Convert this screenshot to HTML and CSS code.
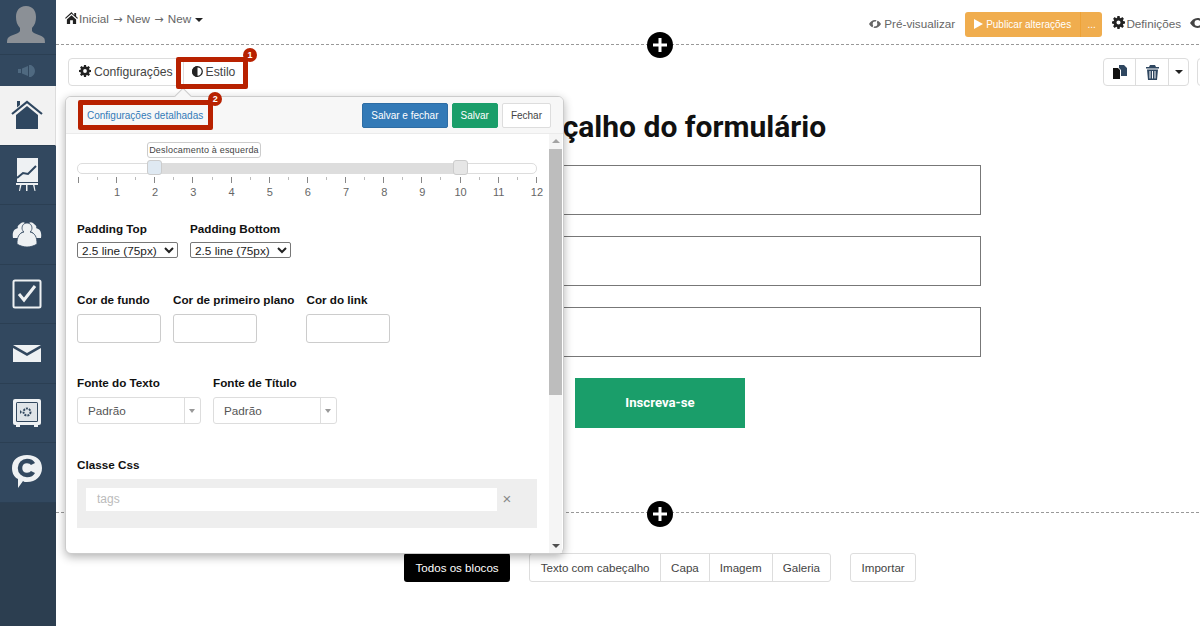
FILE: index.html
```html
<!DOCTYPE html>
<html>
<head>
	<meta charset="utf-8">
	<title>Editor</title>
	<link rel="stylesheet" href="styles.css">
</head>
<body>
	<div class="sidebar">
		<div class="side-avatar">
			<svg width="56" height="54" viewBox="0 0 56 54"><path fill="#8b9096" d="M26 6c-7 0-10 5-10 11 0 4 1 8 4 11v3c-1 3-10 4-12 7-1 1-1 5-1 5h38s0-4-1-5c-2-3-11-4-12-7v-3c3-3 4-7 4-11 0-6-3-11-10-11z"/></svg>
		</div>
		<div class="side-sound">
			<svg width="18" height="12" viewBox="0 0 18 12"><path fill="#4f6980" d="M0 4h3v4H0zM4 3.500l6-2.500v10L4 8.500zM11 0h2c2 1 4 3 4 6s-2 5-4 6h-2z"/></svg>
		</div>
		<div class="side-item active">
			<svg width="32" height="30" viewBox="0 0 32 30"><path fill="#2f4760" d="M6 1h3v4L6 7.500z"/><path fill="none" stroke="#2f4760" stroke-width="2.200" d="M1 14 16 2l15 12"/><path fill="#2f4760" d="M5 15 16 6l11 9v14H5z"/></svg>
		</div>
		<div class="side-item">
			<svg width="24" height="34" viewBox="0 0 24 34"><path fill="#eef1f3" d="M2 0h21v24H2z"/><path fill="none" stroke="#2f4760" stroke-width="2" d="M2 20l6-5 5 1 8-8"/><path fill="#eef1f3" d="M1 25h22v2H1zM5 27l-1 6h1l1.500-6zM11 27h1.500v6H11zM18 27l1.500 6h1l-1-6z"/></svg>
		</div>
		<div class="side-item">
			<svg width="30" height="26" viewBox="0 0 30 26"><path fill="#eef1f3" d="M8 3a3.500 3.500 0 0 1 5-1c-2 2-2 5-1 8-3 1-5 3-6 7H1c-1-6 1-9 5-10-1-1 0-3 2-4zM22 3a3.500 3.500 0 0 0-5-1c2 2 2 5 1 8 3 1 5 3 6 7h5c1-6-1-9-5-10 1-1 0-3-2-4z"/><path fill="#eef1f3" d="M15 2c3 0 5 2 5 5 0 2-1 3-2 4 5 1 7 5 7 12-3 2-7 3-10 3s-7-1-10-3c0-7 2-11 7-12-1-1-2-2-2-4 0-3 2-5 5-5z" stroke="#32485f" stroke-width=".8"/></svg>
		</div>
		<div class="side-item">
			<svg width="30" height="30" viewBox="0 0 30 30"><rect x="1.500" y="1.500" width="27" height="27" rx="1.500" fill="none" stroke="#eef1f3" stroke-width="2"/><path fill="none" stroke="#eef1f3" stroke-width="3" d="M7 15l5 6 11-14"/></svg>
		</div>
		<div class="side-item">
			<svg width="28" height="17" viewBox="0 0 28 17"><path fill="#eef1f3" d="M0 0l14 8 14-8zM0 3v14h28V3L14 11z"/></svg>
		</div>
		<div class="side-item">
			<svg width="30" height="30" viewBox="0 0 30 30"><rect x="1" y="1" width="28" height="26" rx="2" fill="#eef1f3"/><rect x="4" y="4" width="22" height="20" rx="1.500" fill="#32485f"/><rect x="5" y="5" width="20" height="18" fill="#dfe4e8"/><circle cx="15" cy="14" r="3.500" fill="none" stroke="#32485f" stroke-width="2" stroke-dasharray="2 1"/><path fill="#32485f" d="M8 12l2 2-2 2z"/><path fill="#eef1f3" d="M4 27h4v2H4zM22 27h4v2h-4z"/></svg>
		</div>
		<div class="side-item">
			<svg width="30" height="34" viewBox="0 0 30 34"><path fill="#eef1f3" d="M15 0c9 0 15 5 15 13 0 8-6 14-15 14-2 0-3 0-4-1l-5 7v-9C2 22 0 18 0 13 0 5 6 0 15 0z"/><path fill="none" stroke="#32485f" stroke-width="4.500" d="M21 9c-1-2-3-3-6-3-4 0-7 3-7 7s3 7 7 7c3 0 5-1 6-3"/></svg>
		</div>
		<div class="side-rest"></div>
	</div>

	<div class="main">
		<div class="topbar">
			<div class="crumbs">
				<svg width="13" height="12" viewBox="0 0 14 13"><path fill="#222" d="M7 0 0 6.500l.8.8L7 1.800l6.200 5.500.8-.8-2-1.900V1h-2v2.500zM2 8l5-4.500L12 8v5H8.500V9h-3v4H2z"/></svg>
				<span>Inicial <span class="crumb-sep">→</span> New <span class="crumb-sep">→</span> New</span>
				<span class="caret"></span>
			</div>
			<div class="top-actions">
				<span class="top-link">
					<svg class="ico" width="12" height="10" viewBox="0 0 15 12"><path fill="#666" d="M7.500 1C4 1 1.500 3.500 0 6c1.500 2.500 4 5 7.500 5S13.500 8.500 15 6c-1.500-2.500-4-5-7.500-5zm0 2a3 3 0 1 1 0 6 3 3 0 0 1 0-6z"/><path stroke="#fff" stroke-width="1.500" d="M11 0 4 12"/></svg>
					Pré-visualizar
				</span>
				<div class="publish">
					<span class="publish-main"><svg width="9" height="10" viewBox="0 0 9 10"><path fill="#fff" d="M0 0l9 5-9 5z"/></svg>Publicar alterações</span>
					<span class="publish-more">...</span>
				</div>
				<span class="top-link settings">
					<svg class="ico" width="13" height="13" viewBox="0 0 14 14"><use href="#gear"/></svg>
					Definições
				</span>
				<svg class="ico eye-cut" width="15" height="12" viewBox="0 0 15 12"><path fill="#444" d="M7.500 1C4 1 1.500 3.500 0 6c1.500 2.500 4 5 7.500 5S13.500 8.500 15 6c-1.500-2.500-4-5-7.500-5zm0 2a3 3 0 1 1 0 6 3 3 0 0 1 0-6z"/></svg>
			</div>
		</div>
		<span class="plus plus-top"><svg width="14" height="14" viewBox="0 0 14 14"><path fill="#fff" d="M5.500 0h3v5.500H14v3H8.500V14h-3V8.500H0v-3h5.500z"/></svg></span>

		<div class="toolbar">
			<div class="tabs">
				<span class="tab">
					<svg class="ico" width="12" height="12" viewBox="0 0 14 14"><use href="#gear"/></svg>Configurações
				</span>
				<span class="tab tab-style">
					<svg class="ico" width="11" height="11" viewBox="0 0 12 12"><circle cx="6" cy="6" r="5.200" fill="none" stroke="#222" stroke-width="1.400"/><path fill="#222" d="M6 0a6 6 0 0 0 0 12z"/></svg>Estilo
				</span>
			</div>
			<div class="tools">
				<div class="tool-group">
					<span class="tool">
						<svg width="14" height="14" viewBox="0 0 14 14"><path fill="#111" d="M0 3h5l2 2v9H0z"/><path fill="#2f4760" d="M7 0h4l3 3v8H8V5L6 3V0z"/></svg>
					</span>
					<span class="tool tool-wide">
						<svg width="13" height="15" viewBox="0 0 13 15"><path fill="#2f4760" d="M4 0h5l1 2h3v1.500H0V2h3zM1 4.500h11L11 15H2zM3.500 6v7.500h1V6zm2.500 0v7.500h1V6zm2.500 0v7.500h1V6z"/></svg>
					</span>
					<span class="tool tool-small"><span class="caret"></span></span>
				</div>
				<span class="tool-cut"></span>
			</div>
		</div>

		<div class="form">
			<h2 class="form-title">Cabeçalho do formulário</h2>
			<div class="form-input"></div>
			<div class="form-input"></div>
			<div class="form-input"></div>
			<div class="form-submit">Inscreva-se</div>
		</div>

		<div class="divider">
			<span class="plus"><svg width="14" height="14" viewBox="0 0 14 14"><path fill="#fff" d="M5.500 0h3v5.500H14v3H8.500V14h-3V8.500H0v-3h5.500z"/></svg></span>
		</div>

		<div class="blocks">
			<span class="block-all">Todos os blocos</span>
			<div class="block-group">
				<span class="block-btn">Texto com cabeçalho</span>
				<span class="block-btn">Capa</span>
				<span class="block-btn">Imagem</span>
				<span class="block-btn">Galeria</span>
			</div>
			<span class="block-btn block-import">Importar</span>
		</div>

		<!-- marcações do tutorial -->
		<div class="mark mark-style"><span class="badge">1</span></div>

		<div class="popover">
			<span class="arrow"></span>
			<div class="pop-head">
				<a class="detail-link">Configurações detalhadas<span class="badge badge-two">2</span></a>
				<div class="pop-actions">
					<span class="btn btn-blue">Salvar e fechar</span>
					<span class="btn btn-green">Salvar</span>
					<span class="btn">Fechar</span>
				</div>
			</div>
			<div class="pop-scroll">
				<div class="pop-body">
					<div class="slider">
						<span class="slider-tip">Deslocamento à esquerda</span>
						<div class="track">
							<span class="track-fill"></span>
							<span class="handle handle-left"></span>
							<span class="handle handle-right"></span>
						</div>
						<div class="ticks" id="ticks"></div>
						<div class="tick-labels">
							<span>1</span><span>2</span><span>3</span><span>4</span><span>5</span><span>6</span>
							<span>7</span><span>8</span><span>9</span><span>10</span><span>11</span><span>12</span>
						</div>
					</div>

					<div class="fields fields-pad">
						<div class="field">
							<label>Padding Top</label>
							<select class="native"><option>2.5 line (75px)</option></select>
						</div>
						<div class="field">
							<label>Padding Bottom</label>
							<select class="native"><option>2.5 line (75px)</option></select>
						</div>
					</div>

					<div class="fields fields-color">
						<div class="field">
							<label>Cor de fundo</label>
							<div class="color-box"></div>
						</div>
						<div class="field">
							<label>Cor de primeiro plano</label>
							<div class="color-box"></div>
						</div>
						<div class="field">
							<label>Cor do link</label>
							<div class="color-box"></div>
						</div>
					</div>

					<div class="fields fields-font">
						<div class="field">
							<label>Fonte do Texto</label>
							<div class="combo"><span class="combo-value">Padrão</span><span class="combo-arrow"></span></div>
						</div>
						<div class="field">
							<label>Fonte de Título</label>
							<div class="combo"><span class="combo-value">Padrão</span><span class="combo-arrow"></span></div>
						</div>
					</div>

					<div class="field field-css">
						<label>Classe Css</label>
						<div class="tags">
							<span class="tags-input">tags</span>
							<span class="tags-clear">×</span>
						</div>
					</div>
				</div>
				<div class="scrollbar">
					<span class="scroll-up"></span>
					<span class="scroll-thumb"></span>
					<span class="scroll-down"></span>
				</div>
			</div>
		</div>
	</div>

	<svg width="0" height="0" class="defs">
		<symbol id="gear" viewBox="0 0 14 14"><path fill="#222" fill-rule="evenodd" d="M5.800 0h2.400l.3 1.900 1 .4L11.100 1.200l1.700 1.700-1.100 1.600.4 1 1.900.3v2.400l-1.900.3-.4 1 1.100 1.600-1.700 1.700-1.600-1.100-1 .4-.3 1.900H5.800l-.3-1.900-1-.4-1.600 1.100-1.700-1.700 1.100-1.600-.4-1L0 8.200V5.800l1.900-.3.4-1-1.100-1.600 1.700-1.700 1.600 1.100 1-.4zM7 4.800a2.200 2.200 0 1 0 0 4.400 2.200 2.200 0 0 0 0-4.400z"/></symbol>
	</svg>

	<script>
	// reguas do slider: 25 marcas, uma sim outra nao maior
	var ticks = document.getElementById('ticks');
	for (var i = 0; i <= 24; i++) {
		var t = document.createElement('span');
		t.className = i % 2 == 0 ? 'tick tick-big' : 'tick';
		ticks.appendChild(t);
	}
	</script>
</body>
</html>
```

FILE: styles.css
```css
html, body {
	margin: 0;
	padding: 0;
	height: 100%;
}
body {
	display: flex;
	overflow: hidden;
	font-family: "Liberation Sans", Arial, sans-serif;
	font-size: 14px;
	color: #333;
	background: #fff;
}
.defs {
	position: absolute;
}
.ico {
	vertical-align: -1px;
}

/* barra lateral */
.sidebar {
	width: 56px;
	flex: none;
	display: flex;
	flex-direction: column;
	background: #32485f;
}
.side-avatar {
	height: 55px;
	box-sizing: border-box;
	border-bottom: 1px solid #2b3f53;
}
.side-avatar svg {
	display: block;
}
.side-sound {
	height: 31px;
	padding-right: 2px;
	display: flex;
	align-items: center;
	justify-content: center;
}
.side-item {
	height: 59.5px;
	flex: none;
	box-sizing: border-box;
	padding-right: 2px;
	display: flex;
	align-items: center;
	justify-content: center;
	border-bottom: 1px solid #2b3f53;
}
.side-item.active {
	background: #f2f2f2;
	border-right: 1px solid #ddd;
	padding-right: 1px;
}
.side-rest {
	flex: 1;
	background: #2c3e50;
}

/* area principal */
.main {
	width: 1208px;
	flex: none;
	position: relative;
}
.topbar {
	height: 45px;
	box-sizing: border-box;
	border-bottom: 1px dashed #999;
	display: flex;
	justify-content: space-between;
	padding: 12px 0 0 9px;
	color: #666;
	font-size: 11.7px;
}
.crumbs {
	display: flex;
	align-items: flex-start;
	gap: 1px;
	line-height: 14px;
}
.crumb-sep {
	margin: 0 1px;
	font-family: "DejaVu Sans", sans-serif;
	font-size: 11px;
}
.caret {
	display: inline-block;
	margin-left: 3px;
	border-top: 4px solid #222;
	border-left: 4px solid transparent;
	border-right: 4px solid transparent;
}
.crumbs .caret {
	margin-top: 6px;
}
.top-actions {
	display: flex;
	align-items: flex-start;
	gap: 10px;
	margin-right: 59px;
}
.top-link {
	line-height: 24px;
	white-space: nowrap;
}
.settings svg {
	margin-right: -2px;
}
.eye-cut {
	margin: 5px 0 0 -1px;
}
.publish {
	display: flex;
	height: 25px;
	border-radius: 3px;
	background: #f0ad4e;
	color: #fff;
	font-size: 10px;
	line-height: 25px;
}
.publish-main {
	padding: 0 9px;
	border-right: 1px solid #eea236;
	white-space: nowrap;
}
.publish-main svg {
	margin-right: 3px;
	vertical-align: -1px;
}
.publish-more {
	width: 21px;
	text-align: center;
}
.plus {
	width: 26px;
	height: 26px;
	flex: none;
	border-radius: 50%;
	background: #000;
	display: flex;
	align-items: center;
	justify-content: center;
}
.plus-top {
	position: absolute;
	left: 591px;
	top: 32px;
}

.toolbar {
	display: flex;
	justify-content: space-between;
	padding: 13px 0 0 12px;
}
.tabs {
	display: flex;
	height: 28px;
	box-sizing: border-box;
	border: 1px solid #ddd;
	border-radius: 4px;
}
.tab {
	padding: 0 10px;
	line-height: 26px;
	font-size: 12.2px;
	color: #444;
	white-space: nowrap;
}
.tab svg {
	margin-right: 3px;
}
.tab-style {
	padding-left: 8px;
	border-left: 1px solid #ddd;
}
.tools {
	display: flex;
	gap: 8px;
}
.tool-group {
	display: flex;
	height: 28px;
	box-sizing: border-box;
	border: 1px solid #ddd;
	border-radius: 4px;
}
.tool {
	width: 31px;
	display: flex;
	align-items: center;
	justify-content: center;
	border-right: 1px solid #ddd;
}
.tool-wide {
	width: 32px;
}
.tool-small {
	width: 19px;
	border-right: 0;
}
.tool-small .caret {
	margin: 0;
}
.tool-cut {
	width: 67px;
	height: 28px;
	box-sizing: border-box;
	border: 1px solid #ddd;
	border-radius: 4px;
}

/* formulario */
.form {
	display: flex;
	flex-direction: column;
	align-items: center;
	margin-top: 21px;
}
.form-title {
	margin: 0;
	height: 58px;
	font-family: Roboto, sans-serif;
	font-size: 30px;
	line-height: 40px;
	font-weight: 700;
	color: #111;
	white-space: nowrap;
}
.form-input {
	width: 642px;
	height: 50px;
	box-sizing: border-box;
	border: 1px solid #777;
	margin-bottom: 21px;
}
.form-submit {
	width: 170px;
	height: 50px;
	background: #1a9e6a;
	color: #fff;
	font-family: Roboto, sans-serif;
	font-size: 13.2px;
	font-weight: 700;
	line-height: 50px;
	text-align: center;
}
.divider {
	height: 1px;
	margin-top: 84px;
	border-top: 1px dashed #999;
	display: flex;
	justify-content: center;
	align-items: center;
}
.blocks {
	display: flex;
	margin-top: 39px;
	padding-left: 348px;
	font-size: 11.6px;
}
.block-all {
	height: 29px;
	line-height: 29px;
	padding: 0 11.500px;
	background: #000;
	color: #fff;
	border-radius: 3px;
	margin-right: 19px;
}
.block-group {
	display: flex;
	height: 29px;
	box-sizing: border-box;
	border: 1px solid #ddd;
	border-radius: 3px;
}
.block-btn {
	padding: 0 10px;
	line-height: 27px;
	color: #444;
	border-left: 1px solid #ddd;
}
.block-btn:first-child {
	padding: 0 10.500px;
	border-left: 0;
}
.block-import {
	height: 29px;
	box-sizing: border-box;
	margin-left: 19px;
	border: 1px solid #ddd;
	border-radius: 3px;
	padding: 0 10.500px;
}

/* marcas vermelhas */
.mark {
	position: absolute;
	z-index: 2;
	box-sizing: border-box;
	border: 5px solid #b82100;
	border-radius: 2px;
}
.mark-style {
	left: 120px;
	top: 57px;
	width: 72px;
	height: 32px;
}
.badge {
	position: absolute;
	right: -14px;
	top: -14px;
	width: 14px;
	height: 14px;
	border-radius: 50%;
	background: #b82100;
	color: #fff;
	font-size: 9px;
	font-weight: 700;
	line-height: 14px;
	text-align: center;
}
.badge-two {
	top: -13px;
}

/* popover */
.popover {
	position: absolute;
	z-index: 1;
	left: 9px;
	top: 96px;
	width: 499px;
	height: 458px;
	box-sizing: border-box;
	background: #fff;
	border: 1px solid #ccc;
	border-radius: 6px;
	box-shadow: 0 3px 10px rgba(0, 0, 0, .3);
	display: flex;
	flex-direction: column;
}
.arrow {
	position: absolute;
	left: 111px;
	top: -7px;
	width: 11px;
	height: 11px;
	background: #f7f7f7;
	border-left: 1px solid #ccc;
	border-top: 1px solid #ccc;
	transform: rotate(45deg);
}
.pop-head {
	height: 37px;
	flex: none;
	box-sizing: border-box;
	background: #f7f7f7;
	border-bottom: 1px solid #ebebeb;
	border-radius: 5px 5px 0 0;
	display: flex;
	justify-content: space-between;
	align-items: center;
	padding: 0 12px;
	position: relative;
}
.detail-link {
	position: relative;
	display: block;
	height: 30px;
	box-sizing: border-box;
	border: 5px solid #b82100;
	border-radius: 2px;
	padding: 0 5px 0 4px;
	font-size: 10px;
	line-height: 21px;
	color: #337ab7;
	white-space: nowrap;
}
.pop-actions {
	display: flex;
	gap: 4px;
}
.btn {
	height: 25px;
	box-sizing: border-box;
	border: 1px solid #ddd;
	border-radius: 2px;
	background: #fff;
	padding: 0 8px;
	font-size: 10px;
	line-height: 23px;
	color: #444;
}
.btn-blue {
	background: #337ab7;
	border-color: #2e6da4;
	color: #fff;
}
.btn-green {
	background: #1a9e6a;
	border-color: #1a9e6a;
	color: #fff;
}
.pop-scroll {
	flex: 1;
	display: flex;
	min-height: 0;
	overflow: hidden;
}
.pop-body {
	flex: 1;
	min-width: 0;
	padding: 8px 12px 0 11px;
}
.scrollbar {
	width: 13px;
	flex: none;
	margin-right: 1px;
	background: #f5f5f5;
	display: flex;
	flex-direction: column;
	align-items: center;
}
.scroll-up, .scroll-down {
	flex: none;
	width: 0;
	box-sizing: border-box;
	border-left: 4px solid transparent;
	border-right: 4px solid transparent;
}
.scroll-up {
	height: 9px;
	margin-bottom: 6px;
	border-top: 5px solid transparent;
	border-bottom: 4px solid #a3a3a3;
}
.scroll-thumb {
	width: 100%;
	height: 246px;
	background: #bdbdbd;
}
.scroll-down {
	margin-top: auto;
	margin-bottom: 5px;
	height: 4px;
	border-top: 4px solid #505050;
}

/* slider */
.slider {
	position: relative;
	height: 70px;
}
.slider-tip {
	position: absolute;
	left: 70px;
	top: 0;
	width: 114px;
	height: 16px;
	box-sizing: border-box;
	border: 1px solid #ccc;
	border-radius: 3px;
	background: #fff;
	font-size: 9px;
	letter-spacing: .2px;
	line-height: 14px;
	text-align: center;
	color: #444;
	white-space: nowrap;
}
.track {
	position: absolute;
	left: 0;
	right: 0;
	top: 21px;
	height: 11px;
	box-sizing: border-box;
	border: 1px solid #ddd;
	border-radius: 5px;
	background: #fff;
}
.track-fill {
	position: absolute;
	left: 76px;
	width: 306px;
	top: 0;
	bottom: 0;
	background: #ddd;
}
.handle {
	position: absolute;
	top: -4px;
	width: 15px;
	height: 15px;
	box-sizing: border-box;
	border: 1px solid #ccc;
	border-radius: 3px;
}
.handle-left {
	left: 69px;
	background: #dfe9f2;
}
.handle-right {
	left: 375px;
	background: #e6e6e6;
}
.ticks {
	position: absolute;
	left: 1px;
	right: 0;
	top: 35px;
	display: flex;
	justify-content: space-between;
}
.tick {
	width: 1px;
	height: 3px;
	background: #bbb;
}
.tick-big {
	height: 6px;
	background: #888;
}
.tick-labels {
	position: absolute;
	left: 30px;
	right: -10px;
	top: 44px;
	display: flex;
	justify-content: space-between;
	font-size: 11px;
	color: #666;
}
.tick-labels span {
	width: 20px;
	text-align: center;
}

/* campos */
.fields {
	display: flex;
}
.field label {
	display: block;
	font-size: 11.7px;
	font-weight: 700;
	color: #111;
	white-space: nowrap;
}
.fields-pad {
	margin-top: 10px;
	gap: 12px;
}
.fields-pad label {
	margin-bottom: 7px;
}
.native {
	display: block;
	width: 101px;
	height: 16px;
	padding: 0;
	font-family: "Liberation Sans", Arial, sans-serif;
	font-size: 11.8px;
	background: #fff;
	color: #222;
	border: 1px solid #777;
	border-radius: 2px;
}
.fields-color {
	margin-top: 35px;
	gap: 12px;
}
.fields-color label {
	margin-bottom: 8px;
}
.color-box {
	width: 84px;
	height: 29px;
	box-sizing: border-box;
	border: 1px solid #ccc;
	border-radius: 3px;
}
.fields-font {
	margin-top: 33px;
	gap: 12px;
}
.fields-font label {
	margin-bottom: 8px;
}
.combo {
	width: 124px;
	height: 27px;
	box-sizing: border-box;
	border: 1px solid #ddd;
	border-radius: 3px;
	display: flex;
	font-size: 11.7px;
	color: #555;
}
.combo-value {
	flex: 1;
	padding-left: 10px;
	line-height: 25px;
}
.combo-arrow {
	width: 15px;
	border-left: 1px solid #ddd;
	position: relative;
}
.combo-arrow:after {
	content: "";
	position: absolute;
	left: 4px;
	top: 11px;
	border-top: 4px solid #999;
	border-left: 3px solid transparent;
	border-right: 3px solid transparent;
}
.field-css {
	margin-top: 34px;
}
.field-css label {
	margin-bottom: 8px;
}
.tags {
	height: 49px;
	box-sizing: border-box;
	background: #eee;
	padding: 9px;
	display: flex;
}
.tags-input {
	width: 411px;
	height: 23px;
	box-sizing: border-box;
	background: #fff;
	padding-left: 11px;
	font-size: 12px;
	line-height: 23px;
	color: #bbb;
}
.tags-clear {
	width: 20px;
	height: 23px;
	font-size: 15px;
	line-height: 22px;
	text-align: center;
	color: #888;
}
```
